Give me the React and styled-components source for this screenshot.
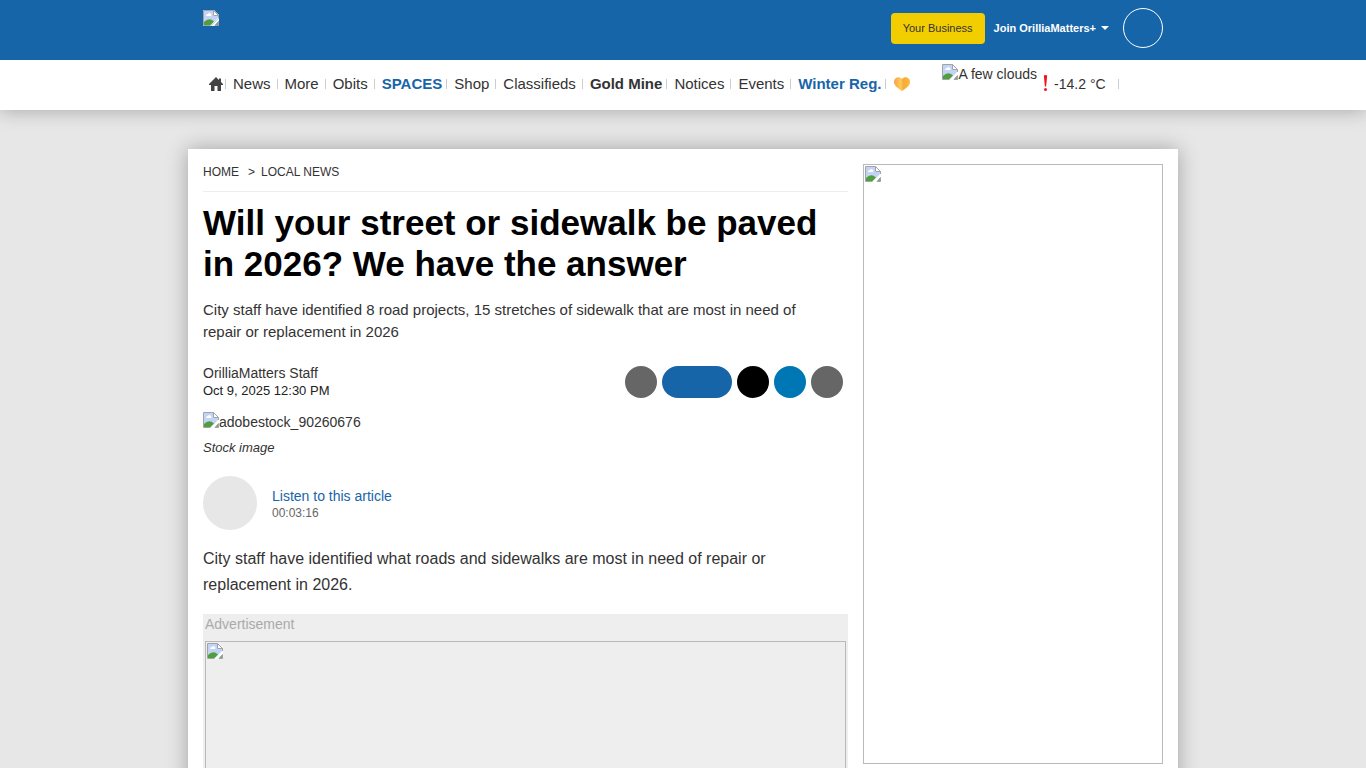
import styled, {createGlobalStyle} from "styled-components";

const GlobalStyle = createGlobalStyle`
  *, *::before, *::after {
    box-sizing: border-box;
  }

  html {
    scrollbar-width: none;
  }

  body {
    margin: 0;
    background: #e7e7e7;
    color: #333;
    font: 14px/20px "Liberation Sans", Arial, sans-serif;
  }

  a {
    color: inherit;
    text-decoration: none;
  }

  button {
    padding: 0;
    border: 0;
    font-family: inherit;
    cursor: pointer;
  }
`

const Wrapper = styled.div`
  width: 100%;
  max-width: 990px;
  margin: 0 auto;
  padding: 0 15px;
  display: flex;
`

const Header = styled.header`
  position: relative;
  z-index: 1;
  background: #1765a9;
`

const HeaderContent = styled(Wrapper)`
  height: 60px;
  align-items: center;
`

const LogoLink = styled.a`
  align-self: flex-start;
  margin-top: 10px;
  margin-right: auto;
  display: flex;
`

const BusinessButton = styled.a`
  padding: 0 12px;
  margin-bottom: 4px;
  border-radius: 4px;
  background: #f2cd00;
  color: #333;
  font-size: 11px;
  line-height: 31px;
`

const JoinButton = styled.button`
  margin: 0 14px 4px 9px;
  display: flex;
  align-items: center;
  gap: 5px;
  background: none;
  color: #fff;
  font-size: 11px;
  font-weight: 700;
`

const Caret = styled.span`
  border: 4px solid transparent;
  border-top-color: currentColor;
  border-bottom: 0;
`

const UserButton = styled.button`
  width: 40px;
  height: 40px;
  margin-bottom: 4px;
  border: 1px solid #fff;
  border-radius: 50%;
  background: none;
`

const NavBar = styled.nav`
  background: #fff;
  box-shadow: 0 0 20px rgba(0, 0, 0, 0.3);
`

const NavContent = styled(Wrapper)`
  height: 50px;
`

const NavList = styled.ul`
  margin: 0;
  padding: 0 0 2px 5px;
  display: flex;
  align-items: center;
  list-style: none;
`

const NavItem = styled.li`
  display: flex;
  align-items: center;

  &::after {
    content: "";
    width: 1px;
    height: 10px;
    margin: 0 7px 0 ${({$gap}) => $gap || "6px"};
    background: #ccc;
  }

  &:last-child::after {
    display: none;
  }
`

const NavLink = styled.a`
  display: flex;
  font-size: 15px;
  font-weight: ${({$bold}) => $bold ? 700 : 400};
  color: ${({$accent}) => $accent ? "#1765a9" : "#333"};
`

const Weather = styled.a`
  margin-left: 31px;
  display: flex;
  align-items: center;
  padding-bottom: 2px;

  &::after {
    content: "";
    width: 1px;
    height: 10px;
    margin-left: 12px;
    background: #ccc;
  }
`

const WeatherImage = styled.span`
  align-self: flex-start;
  margin-top: 4px;
  display: flex;
`

const AlertMark = styled.svg`
  margin: 0 6px 2px;
`

const Main = styled(Wrapper)`
  margin-top: 39px;
  padding-top: 15px;
  gap: 15px;
  align-items: flex-start;
  background: #fff;
  box-shadow: 0 0 20px rgba(0, 0, 0, 0.3);
`

const Article = styled.article`
  flex: 1;
  min-width: 0;
`

const Breadcrumb = styled.nav`
  padding: 0 0 11px;
  display: flex;
  border-bottom: 1px solid #eee;
  font-size: 12px;
  line-height: 16px;
  text-transform: uppercase;

  span {
    margin: 0 6px 0 9px;
  }
`

const Title = styled.h1`
  margin: 10px 0 15px;
  color: #000;
  font-size: 35px;
  line-height: 41px;
`

const Summary = styled.p`
  margin: 0 0 20px;
  padding-right: 30px;
  font-size: 15px;
  line-height: 22px;
`

const Details = styled.div`
  display: flex;
  justify-content: space-between;
  padding-right: 5px;
`

const Byline = styled.div`
  line-height: 20px;

  time {
    display: block;
    color: #222;
    font-size: 13px;
    line-height: 15px;
  }
`

const ShareList = styled.div`
  display: flex;
  gap: 5px;
  padding-top: 3px;
`

const ShareButton = styled.button`
  width: ${({$wide}) => $wide ? "70px" : "32px"};
  height: 32px;
  border-radius: 16px;
  background: ${({$color}) => $color};
`

const Figure = styled.figure`
  margin: 14px 0 0;

  > div {
    display: flex;
  }

  figcaption {
    margin-top: 6px;
    font-size: 13px;
    font-style: italic;
    line-height: 20px;
  }
`

const Listen = styled.div`
  margin: 18px 0 16px;
  display: flex;
  align-items: center;
  gap: 15px;
`

const PlayButton = styled.button`
  width: 54px;
  height: 54px;
  border-radius: 50%;
  background: #e7e7e7;
`

const ListenText = styled.div`
  padding-top: 2px;
  color: #1765a9;
  line-height: 18px;

  span {
    display: block;
    color: #666;
    font-size: 12px;
    line-height: 16px;
  }
`

const Paragraph = styled.p`
  margin: 0 0 16px;
  font-size: 16px;
  line-height: 26px;
`

const Advert = styled.div`
  padding: 0 2px 3px;
  background: #eee;
  color: #aaa;
`

const AdFrame = styled.a`
  display: block;
  height: ${({$height}) => $height};
  border: 1px solid #b9b9b9;
  padding: 1px;
`

const AdLabel = styled.div`
  padding-bottom: 7px;
`

const Sidebar = styled.aside`
  width: 300px;
  flex: none;
  padding-bottom: 15px;
`

const BrokenIcon = () => (
    <svg width="16" height="16" viewBox="0 0 16 16" aria-hidden="true">
        <path d="M0 0H11L16 5V8L8 16H0Z" fill="#fff"/>
        <path d="M1 1H10V6H15V8L8 15H1Z" fill="#c3d3f6"/>
        <path d="M3 6Q3 4 5 4Q6 2 8 4Q9 5 8 6Z" fill="#fff"/>
        <path d="M1 15V12Q6 7 11 11.500L7.500 15Z" fill="#4fa03a"/>
        <path d="M7.500 15.500H.5V.5H10.500L15.500 5.500V8" fill="none" stroke="#a0a3a8"/>
        <path d="M10.500 .5V5.500H15.500Z" fill="#fff" stroke="#a0a3a8"/>
        <path d="M8 16L16 8V11L11.500 16Z" fill="#fff"/>
        <path d="M12 15.500L15.500 11.500V15.500Z" fill="#6fae5f" stroke="#a0a3a8"/>
    </svg>
)

const HomeIcon = () => (
    <svg width="16" height="16" viewBox="0 0 16 16" aria-hidden="true">
        <path d="M8 1L11 4V2.500H13V6L15 8V9H13V15H9.500V10H6.500V15H3V9H1V8Z" fill="#444"/>
    </svg>
)

const HeartIcon = () => (
    <svg width="18" height="18" viewBox="0 0 18 18" aria-hidden="true">
        <defs>
            <linearGradient id="heart" x1="0" y1="0" x2="1" y2="0">
                <stop offset="0" stopColor="#f9a04a"/>
                <stop offset="0.4" stopColor="#fdc95a"/>
                <stop offset="0.6" stopColor="#f8ac38"/>
                <stop offset="1" stopColor="#fcb83f"/>
            </linearGradient>
        </defs>
        <path d="M9 4C7 1 1 2 1 7C1 11 6 14 9 16C12 14 17 11 17 7C17 2 11 1 9 4Z" fill="url(#heart)"/>
    </svg>
)

const navItems = [
    {label: "News"},
    {label: "More"},
    {label: "Obits"},
    {label: "SPACES", bold: true, accent: true},
    {label: "Shop"},
    {label: "Classifieds"},
    {label: "Gold Mine", bold: true},
    {label: "Notices"},
    {label: "Events"},
    {label: "Winter Reg.", bold: true, accent: true},
]

const shareItems = [
    {label: "Share by email", color: "#666"},
    {label: "Share on Facebook", color: "#1765a9", wide: true},
    {label: "Share on X", color: "#000"},
    {label: "Share on LinkedIn", color: "#0077b5"},
    {label: "Print", color: "#666"},
]

export default function App() {
    return (
        <>
            <GlobalStyle/>
            <Header>
                <HeaderContent>
                    <LogoLink href="#" aria-label="OrilliaMatters"><BrokenIcon/></LogoLink>
                    <BusinessButton href="#">Your Business</BusinessButton>
                    <JoinButton>Join OrilliaMatters+ <Caret/></JoinButton>
                    <UserButton aria-label="Account"/>
                </HeaderContent>
            </Header>
            <NavBar>
                <NavContent>
                    <NavList>
                        <NavItem $gap="1px">
                            <NavLink href="#" aria-label="Home"><HomeIcon/></NavLink>
                        </NavItem>
                        {navItems.map(({label, bold, accent}) => (
                            <NavItem key={label} $gap={bold && "4px"}>
                                <NavLink href="#" $bold={bold} $accent={accent}>{label}</NavLink>
                            </NavItem>
                        ))}
                        <NavItem>
                            <NavLink href="#" aria-label="Support"><HeartIcon/></NavLink>
                        </NavItem>
                    </NavList>
                    <Weather href="#">
                        <WeatherImage><BrokenIcon/>A few clouds</WeatherImage>
                        <AlertMark width="5" height="18" viewBox="0 0 5 18" aria-hidden="true">
                            <path d="M.8 1.500Q2.500 .5 4.200 1.500L3.100 12.500H1.900Z" fill="#f0141e"/>
                            <circle cx="2.500" cy="15.500" r="1.500" fill="#f0141e"/>
                        </AlertMark>
                        -14.2 °C
                    </Weather>
                </NavContent>
            </NavBar>
            <Main as="main">
                <Article>
                    <Breadcrumb>
                        <a href="#">Home</a>
                        <span>&gt;</span>
                        <a href="#">Local News</a>
                    </Breadcrumb>
                    <Title>Will your street or sidewalk be paved in 2026? We have the answer</Title>
                    <Summary>
                        City staff have identified 8 road projects, 15 stretches of sidewalk that are most in need
                        of repair or replacement in 2026
                    </Summary>
                    <Details>
                        <Byline>
                            OrilliaMatters Staff
                            <time>Oct 9, 2025 12:30 PM</time>
                        </Byline>
                        <ShareList>
                            {shareItems.map(({label, color, wide}) => (
                                <ShareButton key={label} aria-label={label} $color={color} $wide={wide}/>
                            ))}
                        </ShareList>
                    </Details>
                    <Figure>
                        <div><BrokenIcon/>adobestock_90260676</div>
                        <figcaption>Stock image</figcaption>
                    </Figure>
                    <Listen>
                        <PlayButton aria-label="Play"/>
                        <ListenText>
                            Listen to this article
                            <span>00:03:16</span>
                        </ListenText>
                    </Listen>
                    <Paragraph>
                        City staff have identified what roads and sidewalks are most in need of repair or
                        replacement in 2026.
                    </Paragraph>
                    <Advert>
                        <AdLabel>Advertisement</AdLabel>
                        <AdFrame href="#" $height="480px" aria-label="Advertisement"><BrokenIcon/></AdFrame>
                    </Advert>
                </Article>
                <Sidebar>
                    <AdFrame href="#" $height="600px" aria-label="Advertisement"><BrokenIcon/></AdFrame>
                </Sidebar>
            </Main>
        </>
    )
}
